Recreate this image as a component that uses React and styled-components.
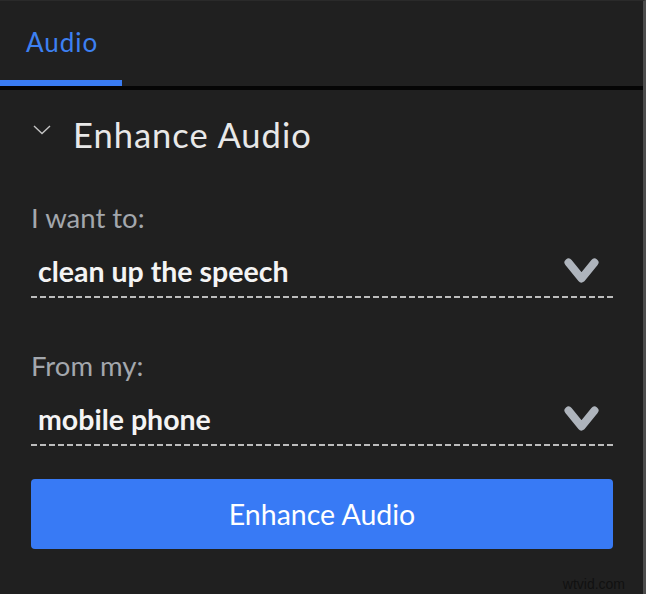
import styled, { createGlobalStyle } from 'styled-components';

const GlobalStyle = createGlobalStyle`
  html, body {
    margin: 0;
    padding: 0;
    background: #202020;
  }
  body {
    font-family: Lato, "Open Sans", sans-serif;
  }
`;

function Chevron({ color = '#aeb4bc' }) {
  return (
    <svg width="35" height="26" viewBox="0 0 35 26" fill="none">
      <path
        d="M4.5 4.5 L17.5 20.5 L30.5 4.5"
        stroke={color}
        strokeWidth="8"
        strokeLinecap="round"
        strokeLinejoin="round"
      />
    </svg>
  );
}

function SelectField({ label, value, first }) {
  return (
    <Field first={first}>
      <FieldLabel>{label}</FieldLabel>
      <SelectRow>
        <SelectValue>{value}</SelectValue>
        <Chevron />
      </SelectRow>
    </Field>
  );
}

export default function App() {
  return (
    <Panel>
      <GlobalStyle />
      <TabBar>
        <Tab active>Audio</Tab>
      </TabBar>
      <Body>
        <SectionHeader>
          <svg width="18" height="10" viewBox="0 0 18 10" fill="none">
            <path d="M1 1 L9 8.5 L17 1" stroke="#c4c4c4" strokeWidth="1.4" />
          </svg>
          <SectionTitle>Enhance Audio</SectionTitle>
        </SectionHeader>
        <SelectField first label="I want to:" value="clean up the speech" />
        <SelectField label="From my:" value="mobile phone" />
        <EnhanceButton>Enhance Audio</EnhanceButton>
      </Body>
      <Watermark>wtvid.com</Watermark>
    </Panel>
  );
}

const Panel = styled.div`
  width: 646px;
  height: 594px;
  box-sizing: border-box;
  background: #202020;
  border-top: 1px solid #2a2a2a;
  border-right: 3px solid #4c4c4c;
  display: flex;
  flex-direction: column;
  position: relative;
`;

const TabBar = styled.div`
  display: flex;
  height: 85px;
  border-bottom: 4px solid #050505;
`;

const Tab = styled.div`
  width: 122px;
  box-sizing: border-box;
  padding: 28px 0 0 26px;
  font-size: 26px;
  line-height: 26px;
  letter-spacing: 1px;
  color: ${({ active }) => (active ? '#3d80f2' : '#aaa')};
  border-bottom: 6px solid ${({ active }) => (active ? '#3a7cf2' : 'transparent')};
`;

const Body = styled.div`
  display: flex;
  flex-direction: column;
  padding: 0 30px 0 31px;
`;

const SectionHeader = styled.div`
  display: flex;
  align-items: flex-start;
  gap: 22px;
  margin-top: 25px;
  padding-left: 2px;

  svg {
    margin-top: 10px;
  }
`;

const SectionTitle = styled.h2`
  margin: 0;
  font-size: 34.5px;
  line-height: 40px;
  font-weight: 400;
  letter-spacing: 1px;
  color: #e8e8e8;
`;

const Field = styled.div`
  display: flex;
  flex-direction: column;
  margin-top: ${({ first }) => (first ? '47px' : '52px')};
`;

const FieldLabel = styled.div`
  font-size: 27.5px;
  line-height: 32px;
  color: #a3a7ad;
  margin-bottom: 20px;
`;

const SelectRow = styled.div`
  display: flex;
  align-items: center;
  justify-content: space-between;
  padding: 0 14px 10px 7px;
  background: repeating-linear-gradient(to right, #bdbdbd 0 6px, transparent 6px 9px)
    bottom / 100% 2px no-repeat;
`;

const SelectValue = styled.span`
  font-size: 28.5px;
  line-height: 34px;
  font-weight: 700;
  color: #f4f4f4;
`;

const EnhanceButton = styled.button`
  margin-top: 33px;
  height: 70px;
  border: none;
  border-radius: 4px;
  background: #387af5;
  color: #fff;
  font-family: inherit;
  font-size: 28.5px;
  font-weight: 400;
  cursor: pointer;
`;

const Watermark = styled.div`
  position: absolute;
  right: 18px;
  bottom: 2px;
  font-family: "Liberation Sans", sans-serif;
  font-size: 14px;
  color: #111;
`;
